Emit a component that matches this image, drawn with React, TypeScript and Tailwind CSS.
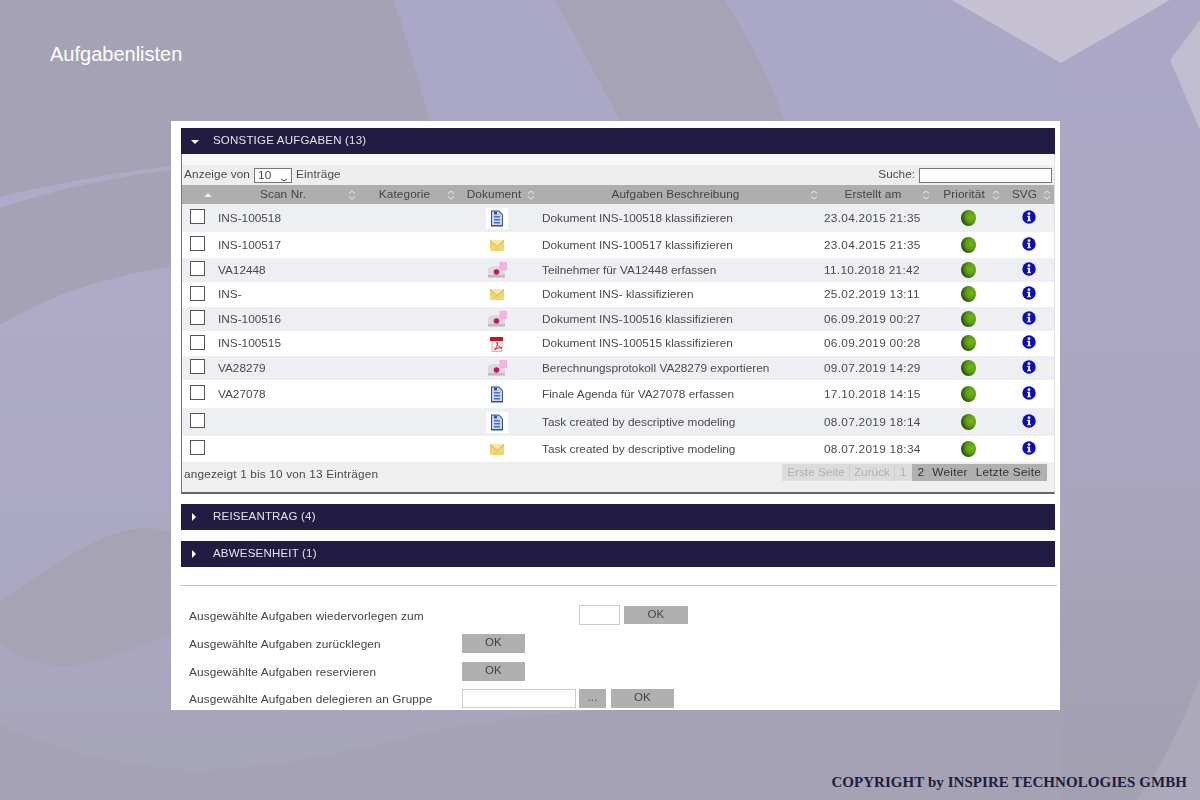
import React from "react";

const gridCols = "grid grid-cols-[33px_144px_99px_80px_283px_112px_70px_51px]";

type DocType = "doc" | "mail" | "pink" | "pdf";

const rows: {
  scan: string;
  doc: DocType;
  text: string;
  date: string;
  rowClass: string;
  tile?: boolean;
}[] = [
  { scan: "INS-100518", doc: "doc", text: "Dokument INS-100518 klassifizieren", date: "23.04.2015 21:35", rowClass: "h-[28px] bg-[#eeeff3]", tile: true },
  { scan: "INS-100517", doc: "mail", text: "Dokument INS-100517 klassifizieren", date: "23.04.2015 21:35", rowClass: "h-[26px] bg-white" },
  { scan: "VA12448", doc: "pink", text: "Teilnehmer für VA12448 erfassen", date: "11.10.2018 21:42", rowClass: "h-[24px] bg-[#eeeff3]" },
  { scan: "INS-", doc: "mail", text: "Dokument INS- klassifizieren", date: "25.02.2019 13:11", rowClass: "h-[25px] bg-white" },
  { scan: "INS-100516", doc: "pink", text: "Dokument INS-100516 klassifizieren", date: "06.09.2019 00:27", rowClass: "h-[24px] bg-[#eeeff3]" },
  { scan: "INS-100515", doc: "pdf", text: "Dokument INS-100515 klassifizieren", date: "06.09.2019 00:28", rowClass: "h-[25px] bg-white" },
  { scan: "VA28279", doc: "pink", text: "Berechnungsprotokoll VA28279 exportieren", date: "09.07.2019 14:29", rowClass: "h-[24px] bg-[#eeeff3]" },
  { scan: "VA27078", doc: "doc", text: "Finale Agenda für VA27078 erfassen", date: "17.10.2018 14:15", rowClass: "h-[28px] bg-white" },
  { scan: "", doc: "doc", text: "Task created by descriptive modeling", date: "08.07.2019 18:14", rowClass: "h-[28px] bg-[#eeeff3]", tile: true },
  { scan: "", doc: "mail", text: "Task created by descriptive modeling", date: "08.07.2019 18:34", rowClass: "h-[26px] bg-white" },
];

function Background() {
  return (
    <svg className="absolute inset-0" width="1200" height="800" viewBox="0 0 1200 800">
      <defs>
        <linearGradient id="right" x1="0" y1="0" x2="0" y2="1">
          <stop offset="0" stopColor="#aba7c6" />
          <stop offset="0.55" stopColor="#aaa6c2" />
          <stop offset="0.85" stopColor="#a3a1b3" />
          <stop offset="1" stopColor="#a2a0b1" />
        </linearGradient>
        <linearGradient id="left" x1="0" y1="0" x2="0" y2="1">
          <stop offset="0" stopColor="#aeaac8" />
          <stop offset="0.6" stopColor="#aba8c4" />
          <stop offset="1" stopColor="#a7a5b9" />
        </linearGradient>
      </defs>
      <rect width="1200" height="800" fill="#a4a2b4" />
      {/* purple right side */}
      <path d="M394 0 C410 50 422 90 432 130 L1060 130 L1060 0 Z" fill="#aba7c6" />
      <rect x="1060" y="0" width="140" height="800" fill="url(#right)" />
      <rect x="1040" y="0" width="30" height="130" fill="#aba7c6" />
      {/* gray wedge on top */}
      <path d="M555 0 C575 35 600 83 625 130 L788 130 C770 80 750 40 725 0 Z" fill="#a5a3b5" />
      {/* light facets top right */}
      <path d="M952 0 L1061 63 L1170 0 Z" fill="#c6c1d3" />
      <path d="M1200 20 L1170 60 L1200 130 Z" fill="#c1bdd0" />
      <path d="M1200 677 C1180 730 1160 770 1136 800 L1200 800 Z" fill="#aba9ba" />
      {/* left waves */}
      <path d="M0 197 C60 182 120 172 175 166 L175 169 C110 178 60 188 0 208 Z" fill="#aeaac8" />
      <path d="M0 325 C50 295 110 275 175 266 L600 266 L600 710 C520 715 470 725 421 733 C340 755 260 770 190 770 C115 765 60 750 0 725 Z" fill="url(#left)" />
      <path d="M0 600 C50 570 100 528 145 528 C155 528 165 530 175 533 L175 632 C120 655 80 668 60 666 C35 664 15 655 0 643 Z" fill="#a5a3b4" />
    </svg>
  );
}

function DocIcon() {
  return (
    <svg width="14" height="17" viewBox="0 0 14 17">
      <path d="M1 .5H9L13 4.5V16.500H1Z" fill="#3f4f7c" />
      <path d="M2 1.500H8.500L12 5V15H2Z" fill="#c4d6f0" />
      <rect x="4" y="1.500" width="3" height="3" fill="#2f55a8" />
      <rect x="4" y="6" width="6" height="1.500" fill="#4a72bd" />
      <rect x="4" y="9" width="6" height="1.500" fill="#4a72bd" />
      <rect x="4" y="12" width="6" height="1.500" fill="#4a72bd" />
    </svg>
  );
}

function MailIcon() {
  return (
    <svg width="14" height="11" viewBox="0 0 14 11">
      <rect x="0" y="0" width="14" height="11" fill="#efd36c" />
      <path d="M0 0L7 6L14 0Z" fill="#f8e8a2" />
      <path d="M0 .5L7 6.500L14 .5" fill="none" stroke="#cda94a" strokeWidth=".8" />
      <path d="M0 11L5 5M14 11L9 5" fill="none" stroke="#f7e7a6" strokeWidth=".8" />
    </svg>
  );
}

function PinkIcon() {
  return (
    <svg width="19" height="16" viewBox="0 0 19 16">
      <path d="M0 6L5 4H13L17 6V15.500H0Z" fill="#dcdade" />
      <rect x="0" y="13" width="17" height="2.500" fill="#bfbbc2" />
      <rect x="12" y="0" width="7" height="7.500" fill="#f3b7df" stroke="#e7a0d2" strokeWidth=".6" />
      <circle cx="8.500" cy="10" r="2.800" fill="#c2185f" />
    </svg>
  );
}

function PdfIcon() {
  return (
    <svg width="15" height="16" viewBox="0 0 15 16">
      <path d="M2 3H12V15.500H2Z" fill="#f4f0f0" stroke="#b8aeae" strokeWidth=".8" />
      <rect x="0" y="1" width="13" height="4" fill="#c8141c" />
      <path d="M4.500 14C7 11 8 8 7 6C6.500 8 9 11 12 12C9 11.500 6.500 12 4.500 14Z" fill="none" stroke="#d2262c" strokeWidth="1" />
    </svg>
  );
}

function DocumentIcon({ type }: { type: DocType }) {
  if (type === "doc") return <DocIcon />;
  if (type === "mail") return <MailIcon />;
  if (type === "pink") return <PinkIcon />;
  return <PdfIcon />;
}

function PriorityDot() {
  return (
    <svg width="15" height="16" viewBox="0 0 15 16">
      <defs>
        <radialGradient id="ball" cx="0.68" cy="0.42" r="0.72">
          <stop offset="0" stopColor="#76b816" />
          <stop offset="0.5" stopColor="#5a9c10" />
          <stop offset="0.85" stopColor="#2f5a10" />
          <stop offset="1" stopColor="#22331a" />
        </radialGradient>
      </defs>
      <ellipse cx="7.500" cy="8" rx="7.500" ry="8" fill="url(#ball)" />
    </svg>
  );
}

function InfoIcon() {
  return (
    <svg width="14" height="14" viewBox="0 0 14 14">
      <circle cx="7" cy="7" r="6.700" fill="#0a0cc0" />
      <circle cx="7" cy="3.600" r="1.400" fill="#fff" />
      <path d="M5.200 5.800H8.100V10.200H9V11.300H5.200V10.200H6.100V6.900H5.200Z" fill="#fff" />
    </svg>
  );
}

function SortIcon() {
  return (
    <svg className="mr-[3px] shrink-0" width="8" height="10" viewBox="0 0 8 10" fill="none" stroke="#d6d6d6" strokeWidth="1.200">
      <path d="M1 3.500L4 1L7 3.500" />
      <path d="M1 6.500L4 9L7 6.500" />
    </svg>
  );
}

function HeaderCell({ label }: { label: string }) {
  return (
    <div className="flex items-center">
      <span className="flex-1 pl-[3px] text-center">{label}</span>
      <SortIcon />
    </div>
  );
}

function Bar({ open, title, className }: { open?: boolean; title: string; className?: string }) {
  return (
    <div className={"flex h-[26px] items-center bg-[#231c42] text-[11.5px] tracking-[0.2px] text-[#e4e2ea] " + (className ?? "")}>
      <span className="flex w-[32px] pl-[10px]">
        {open ? (
          <span className="mt-[1px] h-0 w-0 border-x-[4px] border-t-[4px] border-x-transparent border-t-white" />
        ) : (
          <span className="ml-[1px] h-0 w-0 border-y-[4px] border-l-[4px] border-y-transparent border-l-white" />
        )}
      </span>
      {title}
    </div>
  );
}

function GrayButton({ label, className }: { label: string; className: string }) {
  return <button className={"bg-[#b0b0b0] pb-[3px] text-[11.500px] text-[#444] " + className}>{label}</button>;
}

export default function App() {
  return (
    <div className="relative h-[800px] w-[1200px] overflow-hidden font-['Liberation_Sans',Arial,sans-serif]">
      <Background />
      <div className="relative">
        <h1 className="pl-[50px] pt-[43px] text-[20px] leading-[23px] text-white">Aufgabenlisten</h1>

        <div className="ml-[171px] mt-[55px] h-[589px] w-[889px] overflow-hidden bg-white pl-[10px] pr-[5px] pt-[7px] text-[11.800px] text-[#4a4a4a] blur-[0.3px]">
          <Bar open title="SONSTIGE AUFGABEN (13)" />

          <div className="border-b-2 border-l border-r border-[#e0e0e0] border-b-[#666] border-l-[#777] bg-[#f7f7f7] pt-[11px]">
            <div className="flex h-[20px] items-center justify-between bg-[#eeeeee] px-[2px]">
              <div className="flex items-center tracking-[0.1px]">
                Anzeige von
                <span className="relative mx-[4px] h-[15px] w-[38px] border border-[#777] bg-white pl-[3px] leading-[13px]">
                  10
                  <svg className="absolute bottom-0 right-[3px]" width="8" height="4" viewBox="0 0 8 4" fill="none" stroke="#444">
                    <path d="M1 1L4 3L7 1" />
                  </svg>
                </span>
                Einträge
              </div>
              <div className="flex items-center">
                Suche:
                <span className="ml-[4px] h-[15px] w-[133px] border border-[#777] bg-white" />
              </div>
            </div>

            <div className={gridCols + " h-[19px] items-center bg-[#aeaeae] tracking-[0.1px] text-[#444]"}>
              <div className="flex justify-end">
                <svg className="mr-[3px]" width="8" height="4" viewBox="0 0 8 4">
                  <path d="M0 4L4 0L8 4Z" fill="#eeeeee" />
                </svg>
              </div>
              <HeaderCell label="Scan Nr." />
              <HeaderCell label="Kategorie" />
              <HeaderCell label="Dokument" />
              <HeaderCell label="Aufgaben Beschreibung" />
              <HeaderCell label="Erstellt am" />
              <HeaderCell label="Priorität" />
              <HeaderCell label="SVG" />
            </div>

            {rows.map((row, i) => (
              <div key={i} className={gridCols + " items-center " + row.rowClass}>
                <div className="pl-[8px]">
                  <span className="mb-[3px] block h-[15px] w-[15px] border-[1.500px] border-[#555] bg-white" />
                </div>
                <div className="pl-[3px] pt-[1px]">{row.scan}</div>
                <div />
                <div className="flex justify-center pr-[2px]">
                  {row.tile ? (
                    <span className="flex h-[21px] w-[22px] items-center justify-center bg-white">
                      <DocumentIcon type={row.doc} />
                    </span>
                  ) : (
                    <DocumentIcon type={row.doc} />
                  )}
                </div>
                <div className="whitespace-nowrap pl-[4px] pt-[1px]">{row.text}</div>
                <div className="pl-[3px] pt-[1px] tracking-[0.3px]">{row.date}</div>
                <div className="flex justify-center pb-[1px]">
                  <PriorityDot />
                </div>
                <div className="flex justify-center pb-[3px]">
                  <InfoIcon />
                </div>
              </div>
            ))}

            <div className="flex h-[30px] items-start justify-between bg-[#efefef] pl-[2px] pr-[7px]">
              <span className="mt-[4px] tracking-[0.17px]">angezeigt 1 bis 10 von 13 Einträgen</span>
              <div className="mt-[2px] flex h-[17px] items-center">
                <div className="flex h-full items-center bg-[#dcdcdc] text-[#b0b0b0]">
                  <span className="border-r border-[#cfcfcf] pl-[5px] pr-[4px]">Erste Seite</span>
                  <span className="border-r border-[#cfcfcf] px-[4px]">Zurück</span>
                  <span className="px-[5px]">1</span>
                </div>
                <div className="flex h-full items-center bg-[#b0b0b0] tracking-[0.25px] text-[#333]">
                  <span className="pl-[6px] pr-[8px]">2</span>
                  <span className="pr-[8px]">Weiter</span>
                  <span className="pr-[6px]">Letzte Seite</span>
                </div>
              </div>
            </div>
          </div>

          <Bar title="REISEANTRAG (4)" className="mt-[10px]" />
          <Bar title="ABWESENHEIT (1)" className="mt-[11px]" />

          <div className="mt-[18px] h-[1px] w-[877px] -translate-x-[1px] bg-[#c4c4c4]" />

          <div className="mt-[19px] pl-[8px] tracking-[0.13px] text-[#444]">
            <div className="flex h-[20px] items-center">
              <span className="mt-[4px] w-[273px]">Ausgewählte Aufgaben wiedervorlegen zum</span>
              <span className="ml-[117px] h-[20px] w-[41px] border border-[#ccc] bg-white" />
              <GrayButton label="OK" className="ml-[4px] h-[18px] w-[64px]" />
            </div>
            <div className="mt-[9px] flex h-[19px] items-center">
              <span className="mt-[3px] w-[273px]">Ausgewählte Aufgaben zurücklegen</span>
              <GrayButton label="OK" className="h-[19px] w-[63px]" />
            </div>
            <div className="mt-[9px] flex h-[19px] items-center">
              <span className="mt-[3px] w-[273px]">Ausgewählte Aufgaben reservieren</span>
              <GrayButton label="OK" className="h-[19px] w-[63px]" />
            </div>
            <div className="mt-[8px] flex h-[19px] items-center">
              <span className="mt-[3px] w-[273px]">Ausgewählte Aufgaben delegieren an Gruppe</span>
              <span className="h-[19px] w-[114px] border border-[#ccc] bg-white" />
              <GrayButton label="..." className="ml-[3px] h-[19px] w-[27px]" />
              <GrayButton label="OK" className="ml-[5px] h-[19px] w-[63px]" />
            </div>
          </div>
        </div>

        <div className="flex justify-end pr-[13px] pt-[64px] font-['Liberation_Serif',serif] text-[15px] font-bold leading-[17px] tracking-[0.05px] text-[#211c40]">
          COPYRIGHT by INSPIRE TECHNOLOGIES GMBH
        </div>
      </div>
    </div>
  );
}
